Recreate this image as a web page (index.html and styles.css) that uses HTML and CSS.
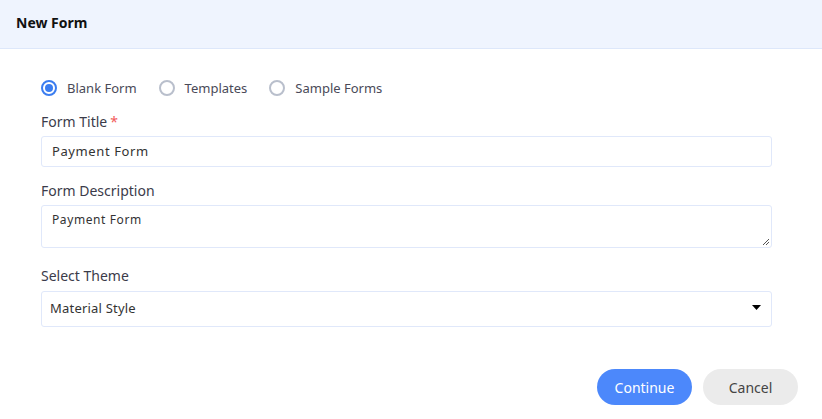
FILE: index.html
```html
<!DOCTYPE html>
<html>
<head>
<meta charset="utf-8">
<link rel="stylesheet" href="styles.css">
</head>
<body>
<div class="header">New Form</div>
<div class="content">
  <div class="radios">
    <label class="radio"><span class="dot checked"></span>Blank Form</label>
    <label class="radio"><span class="dot"></span>Templates</label>
    <label class="radio"><span class="dot"></span>Sample Forms</label>
  </div>
  <div class="field field-title">
    <div class="label">Form Title<span class="req">*</span></div>
    <div class="input">Payment Form</div>
  </div>
  <div class="field field-desc">
    <div class="label">Form Description</div>
    <div class="textarea">Payment Form
      <svg class="grip" width="9" height="9" viewBox="0 0 9 9"><path d="M8 2 L2 8 M8 5 L5 8" stroke="#555" stroke-width="1"/></svg>
    </div>
  </div>
  <div class="field field-theme">
    <div class="label">Select Theme</div>
    <div class="select"><span>Material Style</span>
      <svg width="9" height="5" viewBox="0 0 9 5"><path d="M0 0 H9 L4.5 5 Z" fill="#000"/></svg>
    </div>
  </div>
</div>
<div class="actions">
  <button class="btn primary">Continue</button>
  <button class="btn secondary">Cancel</button>
</div>
</body>
</html>
```
FILE: styles.css
```css
html, body {
  margin: 0;
  padding: 0;
  background: #fff;
  font-family: "Noto Sans", "Open Sans", sans-serif;
  color: #3b3b4a;
}
.header {
  height: 48px;
  line-height: 46px;
  padding-left: 16px;
  background: #eff4fe;
  border-bottom: 1px solid #dde7fa;
  font-weight: bold;
  font-size: 14px;
  color: #111;
}
.content {
  padding: 30px 50px 0 41px;
}
.radios {
  display: flex;
  align-items: center;
  gap: 22px;
  height: 18px;
  font-size: 13px;
  color: #4a4a58;
}
.radio {
  display: flex;
  align-items: center;
}
.dot {
  box-sizing: border-box;
  width: 16px;
  height: 16px;
  border-radius: 50%;
  border: 2px solid #b9bfcc;
  margin-right: 10px;
  position: relative;
}
.dot.checked {
  border-color: #3b7df0;
}
.dot.checked::after {
  content: "";
  position: absolute;
  left: 2px;
  top: 2px;
  width: 8px;
  height: 8px;
  border-radius: 50%;
  background: #3b7df0;
}
.field-title {
  margin-top: 15px;
}
.field-desc {
  margin-top: 14px;
}
.field-theme {
  margin-top: 18px;
}
.label {
  font-size: 14px;
  line-height: 20px;
  color: #3b3b4a;
  margin-bottom: 4px;
}
.field-theme .label {
  margin-bottom: 5px;
}
.req {
  color: #f25a5a;
  margin-left: 3px;
}
.input, .textarea, .select {
  box-sizing: border-box;
  border: 1px solid #e0e8fa;
  border-radius: 3px;
  background: #fff;
  font-size: 13px;
  color: #333;
  letter-spacing: 0.6px;
}
.input {
  height: 31px;
  line-height: 29px;
  padding-left: 10px;
}
.textarea {
  height: 43px;
  padding: 5px 10px;
  font-size: 12px;
  line-height: 18px;
  position: relative;
}
.grip {
  position: absolute;
  right: 1px;
  bottom: 1px;
}
.select {
  height: 36px;
  padding: 0 10px 3px 8px;
  display: flex;
  align-items: center;
  justify-content: space-between;
  letter-spacing: 0.2px;
}
.actions {
  display: flex;
  justify-content: flex-end;
  gap: 11px;
  padding: 42px 24px 0 0;
}
.btn {
  width: 95px;
  height: 36px;
  border: none;
  border-radius: 18px;
  font-family: "Noto Sans", "Open Sans", sans-serif;
  font-size: 14px;
}
.primary {
  background: #4c88fb;
  color: #fff;
}
.secondary {
  background: #ebebeb;
  color: #444;
}
```
